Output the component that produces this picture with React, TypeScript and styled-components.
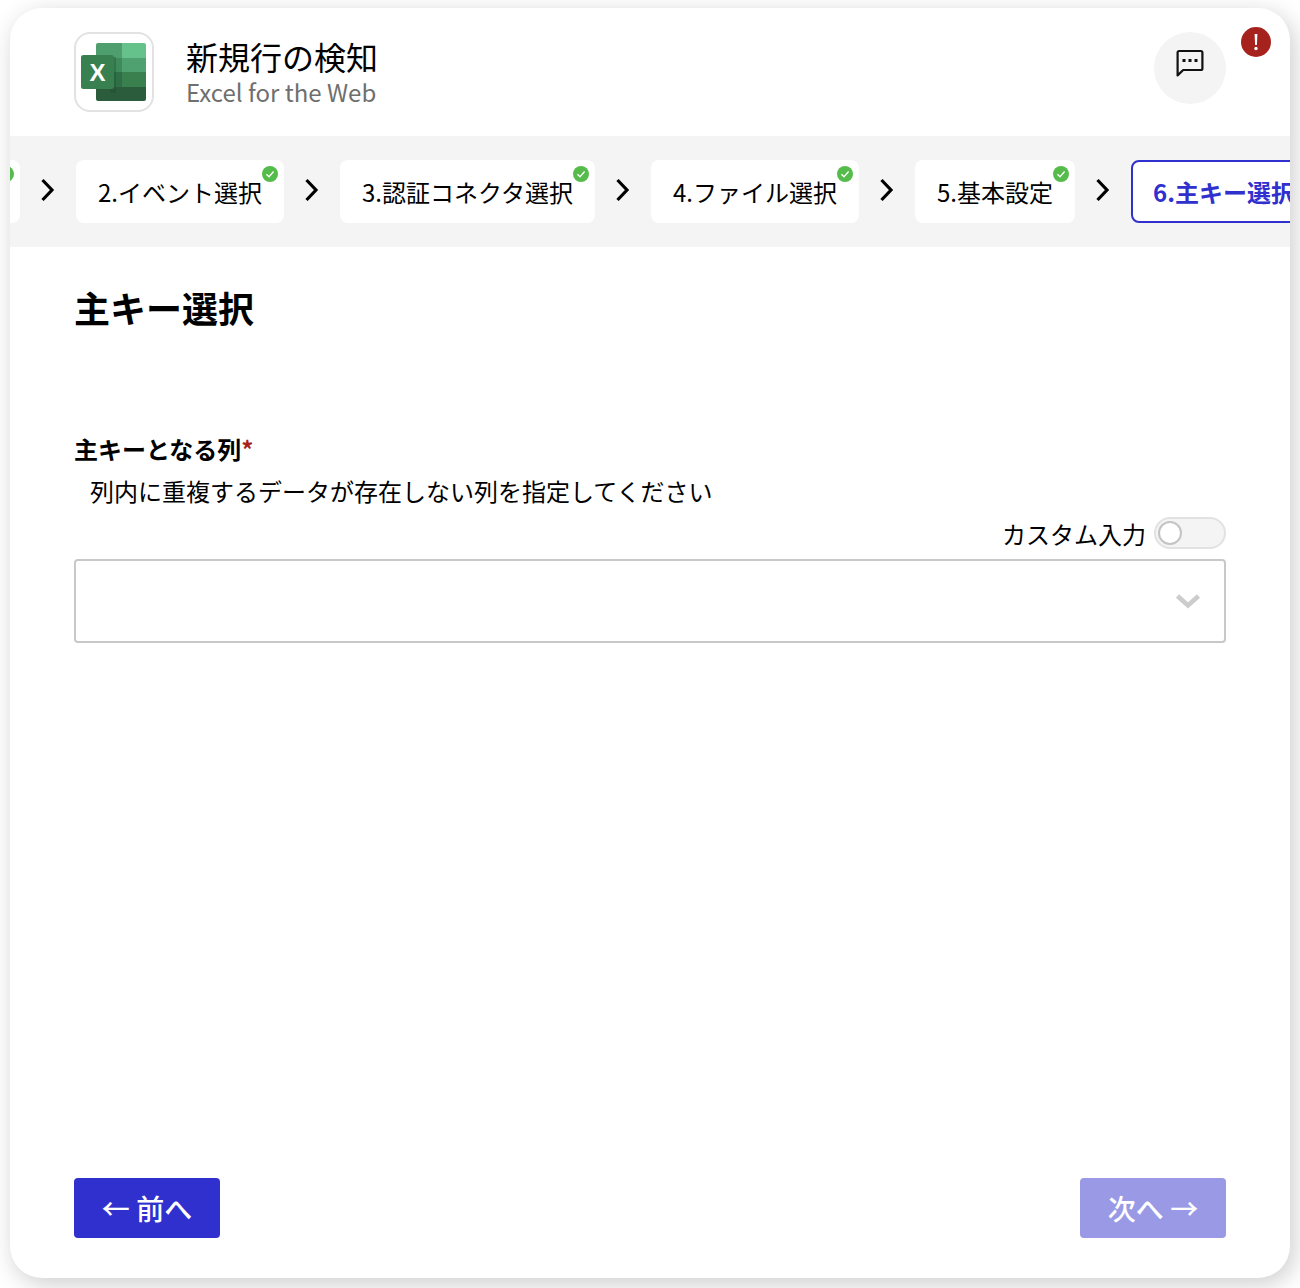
import React from 'react';
import styled, { createGlobalStyle } from 'styled-components';

const FONT = '"Noto Sans CJK JP", "Noto Sans", sans-serif';

const steps = [
  { label: '1.アプリ選択', done: true, width: 200 },
  { label: '2.イベント選択', done: true },
  { label: '3.認証コネクタ選択', done: true },
  { label: '4.ファイル選択', done: true },
  { label: '5.基本設定', done: true },
  { label: '6.主キー選択', done: false },
];

const App: React.FC = () => {
  return (
    <>
      <GlobalStyle />
      <Card>
        <Header>
          <LogoBox>
            <ExcelLogo />
          </LogoBox>
          <TitleGroup>
            <Title>新規行の検知</Title>
            <SubTitle>Excel for the Web</SubTitle>
          </TitleGroup>
          <CommentButton aria-label="コメント">
            <svg width="30" height="30" viewBox="0 0 30 30" fill="none">
              <path
                d="M2.600 3.600a1.600 1.600 0 0 1 1.600-1.600h21.600a1.600 1.600 0 0 1 1.600 1.600v15.800a1.600 1.600 0 0 1-1.600 1.600H8.200l-5.600 5.400z"
                stroke="#111"
                strokeWidth="2.200"
                strokeLinejoin="round"
              />
              <rect x="7.500" y="10" width="3" height="3" fill="#111" />
              <rect x="13.500" y="10" width="3" height="3" fill="#111" />
              <rect x="19.500" y="10" width="3" height="3" fill="#111" />
            </svg>
          </CommentButton>
          <AlertBadge>
            <svg width="30" height="30" viewBox="0 0 30 30">
              <circle cx="15" cy="15" r="15" fill="#a5231c" />
              <path d="M13.600 7h2.800l-.5 11h-1.800z" fill="#fff" />
              <circle cx="15" cy="21.500" r="1.700" fill="#fff" />
            </svg>
          </AlertBadge>
        </Header>

        <StepBar>
          {steps.map((step, i) => (
            <React.Fragment key={step.label}>
              {i > 0 && (
                <StepArrow>
                  <svg width="14" height="24" viewBox="0 0 14 24" fill="none">
                    <path d="M1.500 2 11 12l-9.500 10" stroke="#000" strokeWidth="3.200" />
                  </svg>
                </StepArrow>
              )}
              <Step $active={!step.done} $first={i === 0} style={step.width ? { width: step.width } : undefined}>
                {step.label}
                {step.done && (
                  <CheckMark>
                    <svg width="16" height="16" viewBox="0 0 16 16" fill="none">
                      <circle cx="8" cy="8" r="8" fill="#55bb4a" />
                      <path d="M4.400 8.200 7 10.700l4.600-5.200" stroke="#fff" strokeWidth="1.300" />
                    </svg>
                  </CheckMark>
                )}
              </Step>
            </React.Fragment>
          ))}
        </StepBar>

        <Content>
          <Heading>主キー選択</Heading>
          <FieldLabel>
            主キーとなる列<Required>*</Required>
          </FieldLabel>
          <FieldHelp>列内に重複するデータが存在しない列を指定してください</FieldHelp>
          <ToggleRow>
            <ToggleLabel>カスタム入力</ToggleLabel>
            <Toggle>
              <ToggleKnob />
            </Toggle>
          </ToggleRow>
          <SelectBox>
            <svg width="26" height="16" viewBox="0 0 26 16" fill="none">
              <path d="M2.500 3 13 12.500 23.500 3" stroke="#cccccc" strokeWidth="4.600" />
            </svg>
          </SelectBox>
        </Content>

        <Footer>
          <NavButton>← 前へ</NavButton>
          <NavButton $disabled>次へ →</NavButton>
        </Footer>
      </Card>
    </>
  );
};

const ExcelLogo: React.FC = () => (
  <svg width="68" height="60" viewBox="0 0 68 60">
    <path d="M16 3a2 2 0 0 1 2-2h24v15H16z" fill="#4e9e6e" />
    <path d="M42 1h22a2 2 0 0 1 2 2v13H42z" fill="#66c28b" />
    <rect x="16" y="16" width="26" height="14" fill="#3f8a5c" />
    <rect x="42" y="16" width="24" height="14" fill="#4fa270" />
    <rect x="16" y="30" width="26" height="15" fill="#2f6f47" />
    <rect x="42" y="30" width="24" height="15" fill="#3a7f4e" />
    <path d="M16 45h50v12a2 2 0 0 1-2 2H18a2 2 0 0 1-2-2z" fill="#2b5d3c" />
    <rect x="30" y="15" width="6" height="36" fill="#1f4a2f" opacity="0.35" />
    <rect x="1" y="13" width="33" height="34" rx="2.500" fill="#38804f" />
    <text x="17.500" y="38.500" textAnchor="middle" fontFamily="'Liberation Sans', sans-serif" fontSize="24" fontWeight="700" fill="#fff">
      X
    </text>
  </svg>
);

const GlobalStyle = createGlobalStyle`
  html, body {
    margin: 0;
    padding: 0;
    background: #fff;
  }

  body {
    height: 1288px;
    overflow: hidden;
    padding: 8px 10px 10px;
    box-sizing: border-box;
    font-family: ${FONT};
    color: #000;
  }
`;

const Card = styled.div`
  position: relative;
  display: flex;
  flex-direction: column;
  height: 1270px;
  background: #fff;
  border-radius: 32px;
  overflow: hidden;
  box-shadow: 4px 6px 24px rgba(0, 0, 0, 0.2);
`;

const Header = styled.header`
  display: flex;
  align-items: flex-start;
  height: 128px;
  padding: 24px 64px;
  box-sizing: border-box;
  flex-shrink: 0;
`;

const LogoBox = styled.div`
  display: flex;
  align-items: center;
  justify-content: center;
  width: 80px;
  height: 80px;
  box-sizing: border-box;
  border: 2px solid #e2e2e2;
  border-radius: 16px;
  flex-shrink: 0;
`;

const TitleGroup = styled.div`
  display: flex;
  flex-direction: column;
  margin-left: 32px;
  padding-top: 4px;
`;

const Title = styled.div`
  font-size: 32px;
  line-height: 40px;
`;

const SubTitle = styled.div`
  font-size: 24px;
  line-height: 32px;
  color: #6f6f6f;
`;

const CommentButton = styled.div`
  display: flex;
  align-items: center;
  justify-content: center;
  width: 72px;
  height: 72px;
  box-sizing: border-box;
  padding-bottom: 9px;
  margin-left: auto;
  border-radius: 50%;
  background: #f4f4f4;
`;

const AlertBadge = styled.div`
  position: absolute;
  top: 19px;
  right: 19px;
  width: 30px;
  height: 30px;
  line-height: 0;
`;

const StepBar = styled.nav`
  display: flex;
  align-items: center;
  height: 111px;
  flex-shrink: 0;
  background: #f4f4f4;
  overflow: hidden;
`;

const StepArrow = styled.div`
  display: flex;
  align-items: center;
  justify-content: center;
  width: 56px;
  height: 63px;
  padding-bottom: 4px;
  box-sizing: border-box;
  flex-shrink: 0;
  line-height: 0;
`;

const Step = styled.div<{ $active?: boolean; $first?: boolean }>`
  position: relative;
  flex-shrink: 0;
  height: 63px;
  box-sizing: border-box;
  padding: 0 ${({ $active }) => ($active ? '20px' : '22px')};
  margin-left: ${({ $first }) => ($first ? '-190px' : '0')};
  display: flex;
  align-items: center;
  border-radius: 8px;
  background: #fff;
  font-size: 24px;
  white-space: nowrap;
  color: ${({ $active }) => ($active ? '#3030ce' : '#000')};
  font-weight: ${({ $active }) => ($active ? 700 : 400)};
  border: ${({ $active }) => ($active ? '2px solid #3030ce' : 'none')};
`;

const CheckMark = styled.span`
  position: absolute;
  top: 6px;
  right: 6px;
  width: 16px;
  height: 16px;
  line-height: 0;
`;

const Content = styled.main`
  display: flex;
  flex-direction: column;
  flex: 1;
  padding: 33px 64px 0;
`;

const Heading = styled.h1`
  margin: 0 0 97px;
  font-size: 36px;
  line-height: 54px;
  font-weight: 700;
`;

const FieldLabel = styled.div`
  font-size: 24px;
  line-height: 36px;
  font-weight: 700;
`;

const Required = styled.span`
  color: #a5231c;
`;

const FieldHelp = styled.div`
  margin-top: 6px;
  padding-left: 16px;
  font-size: 24px;
  line-height: 36px;
`;

const ToggleRow = styled.div`
  display: flex;
  align-items: center;
  justify-content: flex-end;
  gap: 8px;
  margin-top: 8px;
  height: 32px;
`;

const ToggleLabel = styled.span`
  font-size: 24px;
  line-height: 36px;
  padding-top: 2px;
`;

const Toggle = styled.div`
  display: flex;
  align-items: center;
  width: 72px;
  height: 32px;
  box-sizing: border-box;
  padding-left: 2px;
  border: 2px solid #e2e2e2;
  border-radius: 16px;
  background: #f4f4f4;
`;

const ToggleKnob = styled.div`
  width: 24px;
  height: 24px;
  box-sizing: border-box;
  border: 2px solid #c4c4c4;
  border-radius: 50%;
  background: #fff;
`;

const SelectBox = styled.div`
  display: flex;
  align-items: center;
  justify-content: flex-end;
  height: 84px;
  margin-top: 10px;
  padding-right: 23px;
  box-sizing: border-box;
  border: 2px solid #c8c8c8;
  border-radius: 4px;
  background: #fff;
`;

const Footer = styled.footer`
  display: flex;
  justify-content: space-between;
  padding: 0 64px 40px;
`;

const NavButton = styled.button<{ $disabled?: boolean }>`
  width: 146px;
  height: 60px;
  padding: 0;
  border: none;
  border-radius: 4px;
  font-family: ${FONT};
  font-size: 28px;
  font-weight: 500;
  color: #fff;
  white-space: nowrap;
  background: ${({ $disabled }) => ($disabled ? '#9999e6' : '#3030ce')};
`;

export default App;
